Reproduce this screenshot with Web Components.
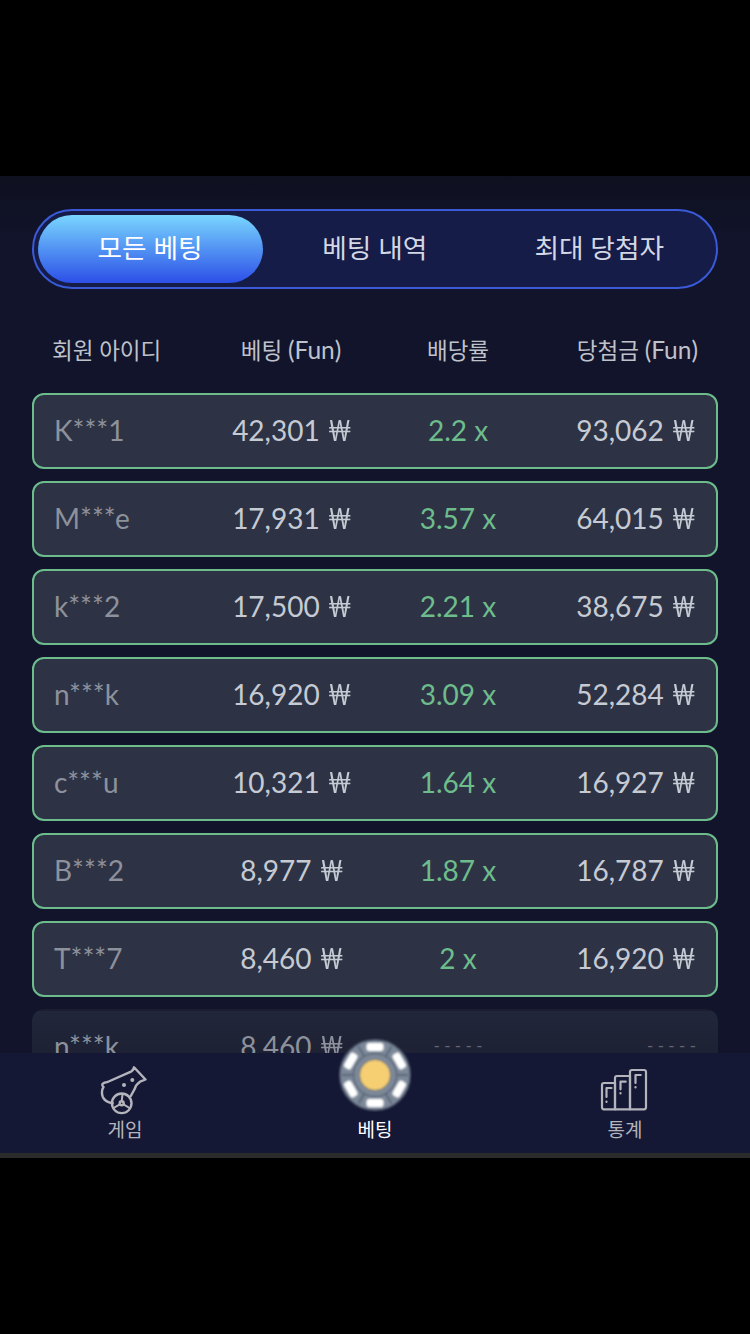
<!DOCTYPE html>
<html lang="ko">
<head>
<meta charset="utf-8">
<title>베팅</title>
<style>
  html, body { margin: 0; background: #000; }
  body { font-family: Lato, "Noto Sans CJK KR", sans-serif; height: 1334px; overflow: hidden; }
</style>
</head>
<body>
<bet-screen>
  <bet-tabs>
    <bet-tab active>모든 베팅</bet-tab>
    <bet-tab>베팅 내역</bet-tab>
    <bet-tab>최대 당첨자</bet-tab>
  </bet-tabs>
  <bet-head></bet-head>
  <bet-list>
    <bet-row user="K***1" stake="42,301" rate="2.2 x" win="93,062"></bet-row>
    <bet-row user="M***e" stake="17,931" rate="3.57 x" win="64,015"></bet-row>
    <bet-row user="k***2" stake="17,500" rate="2.21 x" win="38,675"></bet-row>
    <bet-row user="n***k" stake="16,920" rate="3.09 x" win="52,284"></bet-row>
    <bet-row user="c***u" stake="10,321" rate="1.64 x" win="16,927"></bet-row>
    <bet-row user="B***2" stake="8,977" rate="1.87 x" win="16,787"></bet-row>
    <bet-row user="T***7" stake="8,460" rate="2 x" win="16,920"></bet-row>
    <bet-row pending user="n***k" stake="8,460" rate="- - - - -" win="- - - - -"></bet-row>
  </bet-list>
  <bottom-nav slot="nav">
    <nav-item label="게임"><svg width="50" height="50" viewBox="20 15 50 50" fill="none" stroke="#b4b4bc" stroke-width="2.4" stroke-linecap="round" stroke-linejoin="round">
      <path d="M32.700 53.300C28 52.500 24 50 22.700 46.700 21.500 43 21.500 40 23.500 37 22 36 21.800 34 23.300 33.300 24.500 32.500 26 32.300 27.500 32L51 21.700C52.500 21 53.500 19 54 17.300L65.500 29.500 60 31.700C57.500 33.500 55.500 36 55 38.300 53.500 41 52 44 50.700 46"/>
      <circle cx="41.700" cy="53.300" r="9.800"/>
      <circle cx="41.700" cy="53.300" r="2"/>
      <path d="M41.700 51.300 42.500 44M43.500 54.300 49.500 58M39.900 54.300 33.500 58" stroke-width="2"/>
      <circle cx="44" cy="35" r="2" fill="#b4b4bc" stroke="none"/>
      <circle cx="52.300" cy="30" r="2" fill="#b4b4bc" stroke="none"/>
    </svg></nav-item>
    <nav-item label="베팅" active raised><svg width="74" height="74" viewBox="0 0 74 74">
      <defs><filter id="soft" x="-5%" y="-5%" width="110%" height="110%"><feGaussianBlur stdDeviation="1"/></filter></defs>
      <g filter="url(#soft)">
        <circle cx="37" cy="37" r="35" fill="#7d899a" stroke="#5f6b7c" stroke-width="1.500"/>
        <path d="M37 37 70 37M37 37 4 37M37 37 53.500 8.400M37 37 20.500 8.400M37 37 53.500 65.600M37 37 20.500 65.600" stroke="#5a6677" stroke-width="2"/>
        <circle cx="37" cy="37" r="21.500" fill="#7d899a" stroke="#5a6677" stroke-width="1.500"/>
        <g fill="#fff">
          <rect x="28.500" y="5" width="17" height="8" rx="3"/>
          <rect x="28.500" y="5" width="17" height="8" rx="3" transform="rotate(60 37 37)"/>
          <rect x="28.500" y="5" width="17" height="8" rx="3" transform="rotate(120 37 37)"/>
          <rect x="28.500" y="5" width="17" height="8" rx="3" transform="rotate(180 37 37)"/>
          <rect x="28.500" y="5" width="17" height="8" rx="3" transform="rotate(240 37 37)"/>
          <rect x="28.500" y="5" width="17" height="8" rx="3" transform="rotate(300 37 37)"/>
        </g>
        <circle cx="37" cy="37" r="15.500" fill="#f5cf72" stroke="#6b6f6c" stroke-width="1"/>
      </g>
    </svg></nav-item>
    <nav-item label="통계"><svg width="50" height="50" viewBox="20 15 50 50" fill="none" stroke="#b4b4bc" stroke-width="2.200" stroke-linecap="round" stroke-linejoin="round">
      <path d="M22 35a2 2 0 0 1 2-2H35V59.300H24a2 2 0 0 1-2-2Z"/>
      <path d="M35 28a2 2 0 0 1 2-2H50V59.300H35Z"/>
      <path d="M50 22a2 2 0 0 1 2-2H64a2 2 0 0 1 2 2V57.300a2 2 0 0 1-2 2H50Z"/>
      <path d="M31.500 38H26.500V47M26.500 52V51.500M45.700 31.700H40.500V39.300M40.500 43.500V43M60.700 25H55.500V33M55.500 37.500V37"/>
    </svg></nav-item>
  </bottom-nav>
</bet-screen>

<script>
class BetScreen extends HTMLElement {
  constructor() {
    super();
    this.attachShadow({mode: 'open'}).innerHTML = `
      <style>
        :host { display: block; margin-top: 176px; height: 982px; position: relative; }
        .frame { height: 100%; display: flex; flex-direction: column; background: linear-gradient(#0e1020, #11142a 60px); }
        .top { flex: 1; min-height: 0; overflow: hidden; padding: 33px 32px 0; display: flex; flex-direction: column; }
      </style>
      <div class="frame">
        <div class="top"><slot></slot></div>
        <slot name="nav"></slot>
      </div>`;
  }
}

class BetTabs extends HTMLElement {
  constructor() {
    super();
    this.attachShadow({mode: 'open'}).innerHTML = `
      <style>
        :host { display: grid; grid-template-columns: 225px 1fr 1fr; box-sizing: border-box; height: 80px; flex: none; padding: 4px; border: 2px solid #3a5ad8; border-radius: 40px; background: #151c48; }
      </style>
      <slot></slot>`;
  }
}

class BetTab extends HTMLElement {
  constructor() {
    super();
    this.attachShadow({mode: 'open'}).innerHTML = `
      <style>
        :host { display: flex; align-items: center; justify-content: center; font-size: 26.7px; color: #d4d7e4; border-radius: 34px; padding: 0 1px 5px 0; box-sizing: border-box; }
        :host([active]) { color: #fff; background: linear-gradient(#79d6fe, #2c4fe8); }
      </style>
      <slot></slot>`;
  }
}

class BetHead extends HTMLElement {
  constructor() {
    super();
    this.attachShadow({mode: 'open'}).innerHTML = `
      <style>
        :host { display: grid; grid-template-columns: 152px 170px 164px 1fr; box-sizing: border-box; height: 104px; flex: none; align-items: center; font-size: 22.5px; color: #bfc2cb; padding: 15px 20px 0; white-space: nowrap; }
        b { font-weight: 400; font-size: 24.5px; }
        .mid { text-align: center; margin-left: 4px; }
        .end { text-align: right; }
      </style>
      <span>회원 아이디</span>
      <span class="mid">베팅 <b>(Fun)</b></span>
      <span class="mid">배당률</span>
      <span class="end">당첨금 <b>(Fun)</b></span>`;
  }
}

class BetList extends HTMLElement {
  constructor() {
    super();
    this.attachShadow({mode: 'open'}).innerHTML = `
      <style>
        :host { display: flex; flex-direction: column; gap: 12px; }
      </style>
      <slot></slot>`;
  }
}

class BetRow extends HTMLElement {
  constructor() {
    super();
    this.attachShadow({mode: 'open'}).innerHTML = `
      <style>
        :host { display: grid; grid-template-columns: 152px 170px 164px 1fr; box-sizing: border-box; height: 76px; flex: none; align-items: center; padding: 0 22px 2px 20px; border: 2px solid #6dbd8c; border-radius: 12px; background: #2d3345; font-size: 28px; color: #c6cad3; white-space: nowrap; }
        :host([pending]) { border-color: transparent; background: linear-gradient(#22263a, #1b1e30); color: #a2a5ae; }
        .user { color: #8d919c; }
        .stake { text-align: center; }
        .rate { text-align: center; color: #6dbd8c; }
        .win { text-align: right; }
        /* the won sign is narrower than Lato's own glyph */
        .won { display: inline-block; width: 22px; margin-left: 1px; text-align: left; transform: scaleX(.79); transform-origin: left center; }
        :host([pending]) .rate, :host([pending]) .win { color: #62656f; font-size: 17px; padding-bottom: 1px; }
        :host([pending]) .win { margin-right: -2px; }
        :host([pending]) .user, :host([pending]) .stake { color: #8d919c; }
      </style>
      <span class="user"></span><span class="stake"></span><span class="rate"></span><span class="win"></span>`;
  }
  connectedCallback() {
    const root = this.shadowRoot;
    root.querySelector('.user').textContent = this.getAttribute('user');
    root.querySelector('.rate').textContent = this.getAttribute('rate');
    for (const k of ['stake', 'win']) {
      const v = this.getAttribute(k);
      root.querySelector('.' + k).innerHTML = v.includes(',') ? v + ' <span class="won">₩</span>' : v;
    }
  }
}

class BottomNav extends HTMLElement {
  constructor() {
    super();
    this.attachShadow({mode: 'open'}).innerHTML = `
      <style>
        :host { display: grid; grid-template-columns: repeat(3, 1fr); flex: none; height: 105px; box-sizing: border-box; background: #151835; border-bottom: 5px solid #2b2b2b; position: relative; }
      </style>
      <slot></slot>`;
  }
}

class NavItem extends HTMLElement {
  constructor() {
    super();
    this.attachShadow({mode: 'open'}).innerHTML = `
      <style>
        :host { display: flex; flex-direction: column; align-items: center; justify-content: flex-end; height: 100px; padding-bottom: 11px; box-sizing: border-box; font-size: 19px; color: #b4b4bc; }
        :host([active]) { color: #fff; }
        .icon { display: flex; height: 50px; margin-bottom: 3px; align-items: flex-start; justify-content: center; }
        :host([raised]) ::slotted(svg) { margin-top: -27px; }
        .label { line-height: 24px; }
      </style>
      <div class="icon"><slot></slot></div>
      <div class="label"></div>`;
  }
  connectedCallback() {
    this.shadowRoot.querySelector('.label').textContent = this.getAttribute('label');
  }
}

customElements.define('bet-screen', BetScreen);
customElements.define('bet-tabs', BetTabs);
customElements.define('bet-tab', BetTab);
customElements.define('bet-head', BetHead);
customElements.define('bet-list', BetList);
customElements.define('bet-row', BetRow);
customElements.define('bottom-nav', BottomNav);
customElements.define('nav-item', NavItem);
</script>
</body>
</html>
